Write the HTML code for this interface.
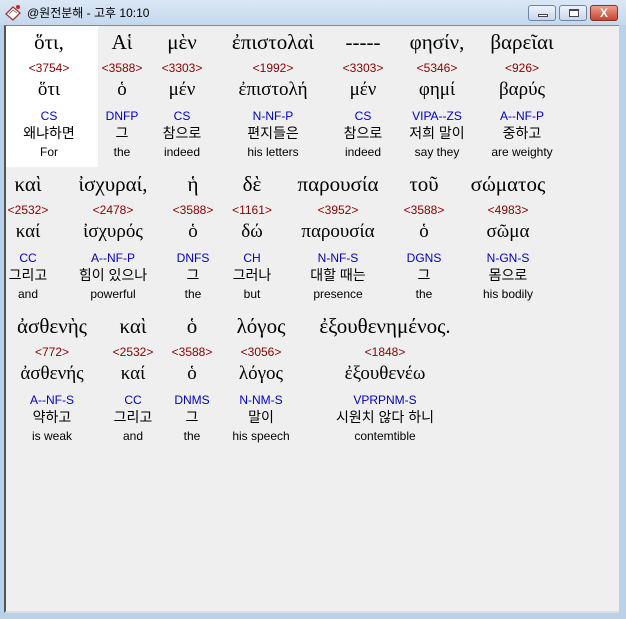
<!DOCTYPE html>
<html><head><meta charset="utf-8"><style>
*{margin:0;padding:0;box-sizing:border-box}
body{width:626px;height:619px;background:#b9d1ea;position:relative;overflow:hidden;font-family:"Liberation Sans","Noto Sans CJK KR",sans-serif}
.title{position:absolute;left:0;top:0;width:626px;height:25px;background:linear-gradient(#dbe7f4,#c4d8ee)}
.title span{position:absolute;left:27px;top:4px;font-size:12px;color:#000;font-family:"Liberation Sans","Noto Sans CJK KR",sans-serif}
.btn{position:absolute;top:5px;height:16px;border:1px solid #6d86a8;border-radius:3px;background:linear-gradient(#eef3f9,#c9d7ea)}
.content{position:absolute;left:4px;top:25px;width:615px;height:588px;background:#efefef;border-left:2px solid #555;border-top:1px solid #888;border-bottom:2px solid #ddd}
.white{position:absolute;left:6px;top:26px;width:92px;height:141px;background:#fff}
.c{position:absolute;width:140px;text-align:center;white-space:nowrap;line-height:1}
.g{font-family:"Liberation Serif","DejaVu Serif",serif;font-size:21px;color:#000}
.s{font-size:12px;color:#8b0000}
.l{font-family:"Liberation Serif","DejaVu Serif",serif;font-size:19px}
.m{font-size:12px;color:#0000c8}
.k{font-size:14px}
.e{font-size:12px}
</style></head><body>
<div class="title"><svg style="position:absolute;left:4px;top:4px" width="18" height="18"><path d="M2 10 L9 3 L16 9 L9 16 Z" fill="#fff" stroke="#a33" stroke-width="1.3"/><path d="M5 10 L9 6 L13 9" fill="none" stroke="#888"/><circle cx="14" cy="3" r="2" fill="#d22"/></svg><span>@원전분해 - 고후 10:10</span></div>
<div class="btn" style="left:528px;width:28px"><div style="position:absolute;left:9px;top:8px;width:10px;height:3px;border:1px solid #445;background:#fff"></div></div>
<div class="btn" style="left:559px;width:28px"><div style="position:absolute;left:9px;top:3px;width:10px;height:8px;border:1px solid #445;border-top-width:2px;background:#fff"></div></div>
<div class="btn" style="left:590px;width:28px;background:linear-gradient(#e9a090,#c9452e);border-color:#8a3020;color:#fff;font-weight:bold;font-size:12px;text-align:center;line-height:14px">X</div>
<div class="content"></div>
<div class="white"></div>
<div id="r"></div>
<script>
const rows=[
 {y:32,cols:[[49,"ὅτι,","<3754>","ὅτι","CS","왜냐하면","For"],[122,"Αἱ","<3588>","ὁ","DNFP","그","the"],[182,"μὲν","<3303>","μέν","CS","참으로","indeed"],[273,"ἐπιστολαὶ","<1992>","ἐπιστολή","N-NF-P","편지들은","his letters"],[363,"-----","<3303>","μέν","CS","참으로","indeed"],[437,"φησίν,","<5346>","φημί","VIPA--ZS","저희 말이","say they"],[522,"βαρεῖαι","<926>","βαρύς","A--NF-P","중하고","are weighty"]]},
 {y:174,cols:[[28,"καὶ","<2532>","καί","CC","그리고","and"],[113,"ἰσχυραί,","<2478>","ἰσχυρός","A--NF-P","힘이 있으나","powerful"],[193,"ἡ","<3588>","ὁ","DNFS","그","the"],[252,"δὲ","<1161>","δώ","CH","그러나","but"],[338,"παρουσία","<3952>","παρουσία","N-NF-S","대할 때는","presence"],[424,"τοῦ","<3588>","ὁ","DGNS","그","the"],[508,"σώματος","<4983>","σῶμα","N-GN-S","몸으로","his bodily"]]},
 {y:316,cols:[[52,"ἀσθενὴς","<772>","ἀσθενής","A--NF-S","약하고","is weak"],[133,"καὶ","<2532>","καί","CC","그리고","and"],[192,"ὁ","<3588>","ὁ","DNMS","그","the"],[261,"λόγος","<3056>","λόγος","N-NM-S","말이","his speech"],[385,"ἐξουθενημένος.","<1848>","ἐξουθενέω","VPRPNM-S","시원치 않다 하니","contemtible"]]}];
let h="";const off=[["g",0],["s",30],["l",48],["m",78],["k",94],["e",114]];
for(const r of rows)for(const c of r.cols)off.forEach(([cl,dy],i)=>{const t=c[i+1].replace(/</g,"&lt;").replace(/>/g,"&gt;");h+=`<div class="c ${cl}" style="left:${c[0]-70}px;top:${r.y+dy}px">${t}</div>`});
document.getElementById("r").innerHTML=h;
</script>
</body></html>
